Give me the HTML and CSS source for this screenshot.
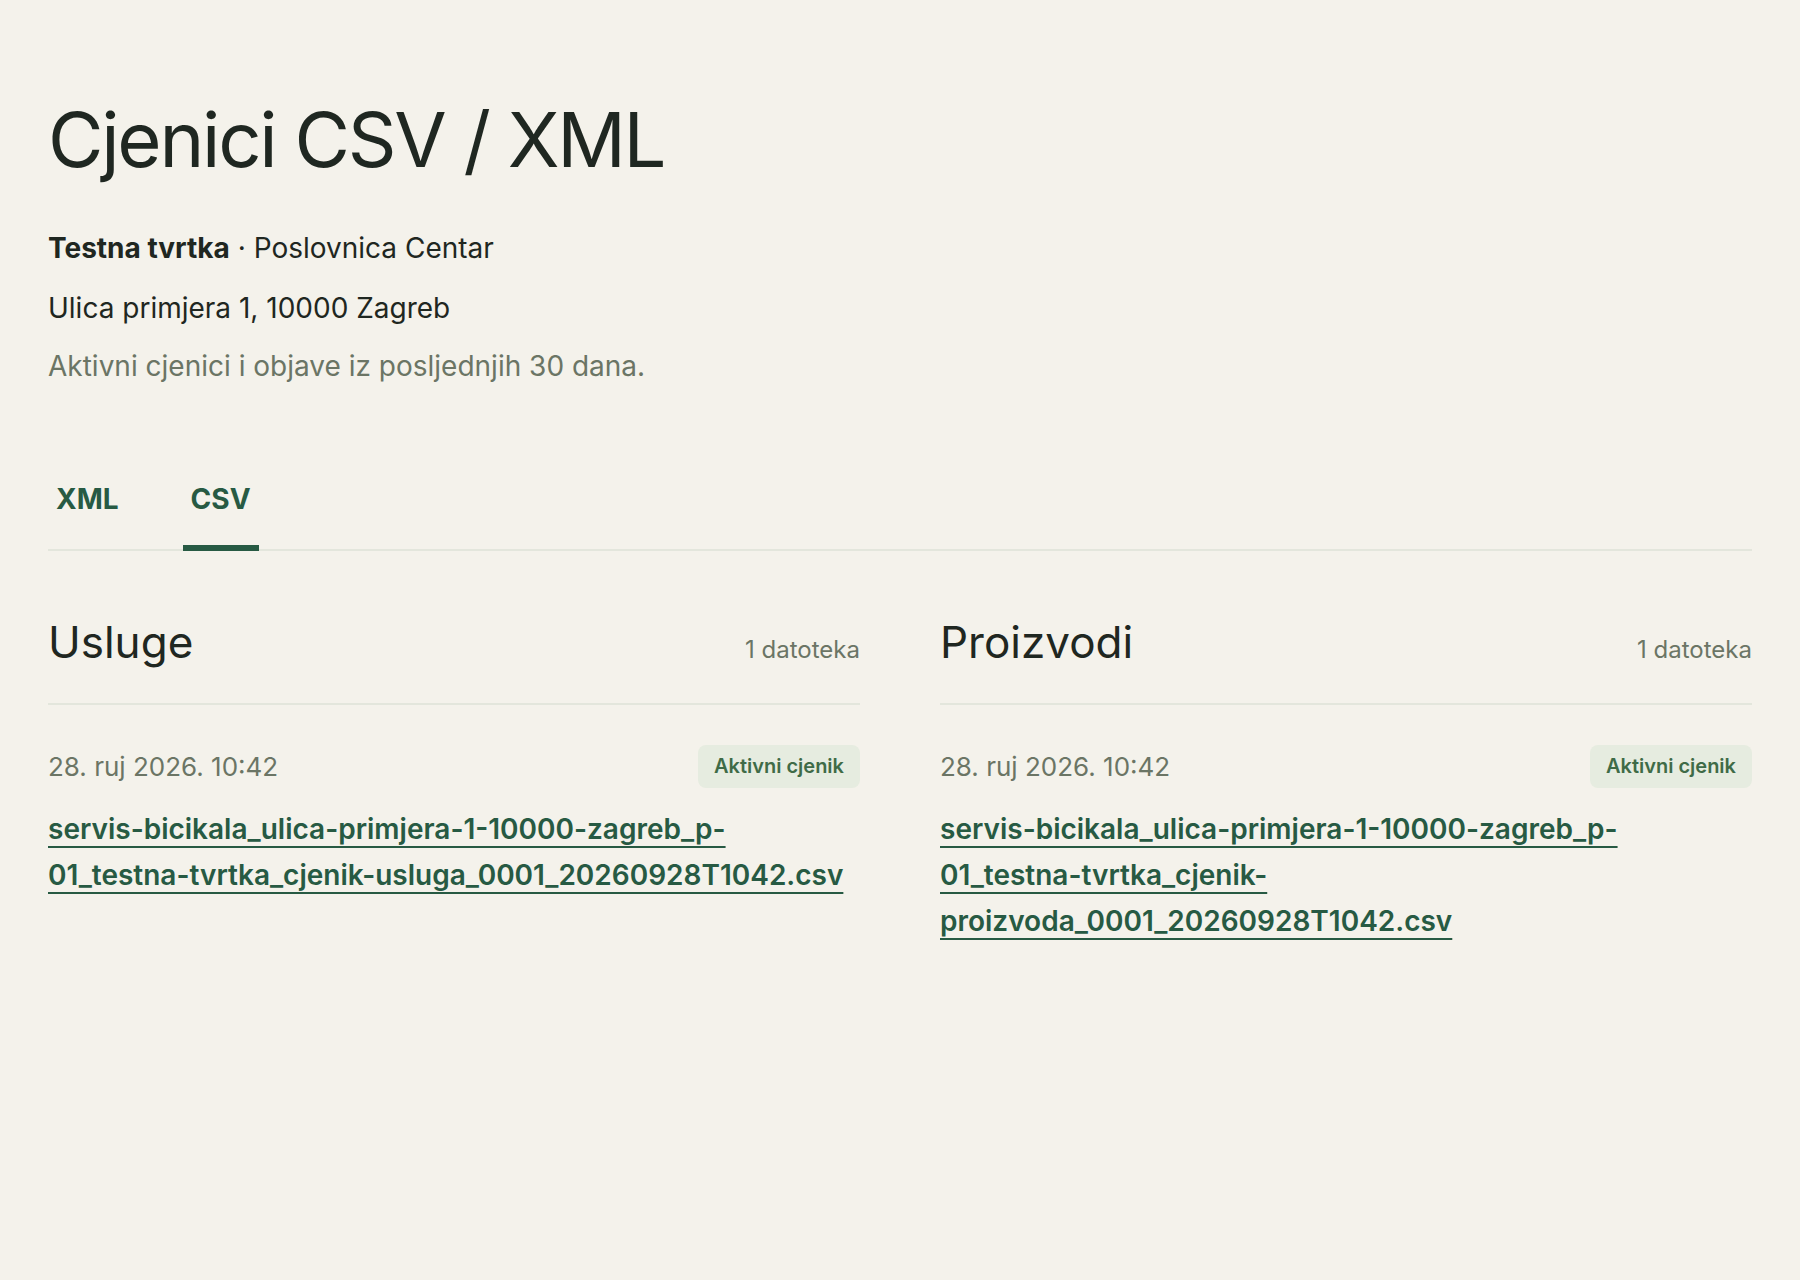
FILE: index.html
```html
<!DOCTYPE html>
<html lang="hr">
<head>
<meta charset="utf-8">
<title>Cjenici CSV / XML</title>
<link rel="stylesheet" href="styles.css">
</head>
<body>
<main class="page">
  <header class="intro">
    <h1 class="title">Cjenici CSV / XML</h1>
    <p class="company"><strong>Testna tvrtka</strong> · Poslovnica Centar</p>
    <p class="address">Ulica primjera 1, 10000 Zagreb</p>
    <p class="note">Aktivni cjenici i objave iz posljednjih 30 dana.</p>
  </header>

  <nav class="tabs">
    <a class="tab" href="#xml">XML</a>
    <a class="tab tab-active" href="#csv">CSV</a>
  </nav>

  <div class="columns">
    <section class="group">
      <div class="group-head">
        <h2 class="group-title">Usluge</h2>
        <span class="group-count">1 datoteka</span>
      </div>
      <div class="file">
        <div class="file-meta">
          <span class="file-date">28. ruj 2026. 10:42</span>
          <span class="badge">Aktivni cjenik</span>
        </div>
        <a class="file-link" href="#">servis-bicikala_ulica-primjera-1-10000-zagreb_p-01_testna-tvrtka_cjenik-usluga_0001_20260928T1042.csv</a>
      </div>
    </section>

    <section class="group">
      <div class="group-head">
        <h2 class="group-title">Proizvodi</h2>
        <span class="group-count">1 datoteka</span>
      </div>
      <div class="file">
        <div class="file-meta">
          <span class="file-date">28. ruj 2026. 10:42</span>
          <span class="badge">Aktivni cjenik</span>
        </div>
        <a class="file-link" href="#">servis-bicikala_ulica-primjera-1-10000-zagreb_p-01_testna-tvrtka_cjenik-proizvoda_0001_20260928T1042.csv</a>
      </div>
    </section>
  </div>
</main>
</body>
</html>
```

FILE: styles.css
```css
* {
  box-sizing: border-box;
}

html, body {
  margin: 0;
  padding: 0;
  background: #f4f2eb;
}

body {
  font-family: Inter, "Noto Sans", "Liberation Sans", sans-serif;
  color: #1f2721;
  min-height: 1280px;
}

.page {
  padding: 94px 48px 48px;
}

.title {
  margin: 0;
  font-size: 76px;
  line-height: 1.2;
  font-weight: 400;
  letter-spacing: -0.03em;
  color: #1f2721;
}

.company,
.address,
.note {
  margin: 0;
  font-size: 28px;
  line-height: 39px;
}

.company {
  margin-top: 44px;
}

.company strong {
  font-weight: 700;
}

.address {
  margin-top: 21px;
}

.note {
  margin-top: 19px;
  color: #6b7565;
}

.tabs {
  display: flex;
  gap: 56px;
  margin-top: 73px;
  border-bottom: 2px solid #e3e6dc;
}

.tab {
  display: block;
  padding: 23px 8px 29px;
  font-size: 28px;
  line-height: 34px;
  font-weight: 700;
  color: #275a43;
  text-decoration: none;
  border-bottom: 6px solid transparent;
  margin-bottom: -2px;
}

.tab-active {
  border-bottom-color: #275a43;
}

.columns {
  display: grid;
  grid-template-columns: 1fr 1fr;
  gap: 80px;
  margin-top: 65px;
}

.group-head {
  display: flex;
  justify-content: space-between;
  align-items: baseline;
  padding-bottom: 34px;
  border-bottom: 2px solid #e3e6dc;
}

.group-title {
  margin: 0;
  font-size: 44px;
  line-height: 53px;
  font-weight: 400;
  color: #1f2721;
}

.group-count {
  font-size: 24px;
  color: #6b7565;
}

.file {
  padding-top: 40px;
}

.file-meta {
  display: flex;
  justify-content: space-between;
  align-items: center;
}

.file-date {
  font-size: 26px;
  line-height: 39px;
  color: #6b7565;
}

.badge {
  display: inline-block;
  padding: 9px 16px;
  font-size: 20px;
  line-height: 25px;
  font-weight: 600;
  color: #3f6b47;
  background: #e6ece0;
  border-radius: 8px;
}

.file-link {
  display: block;
  margin-top: 18px;
  font-size: 28px;
  line-height: 46px;
  font-weight: 600;
  color: #275a43;
  text-decoration: underline;
  text-decoration-thickness: 2px;
  text-underline-offset: 7px;
}
```
